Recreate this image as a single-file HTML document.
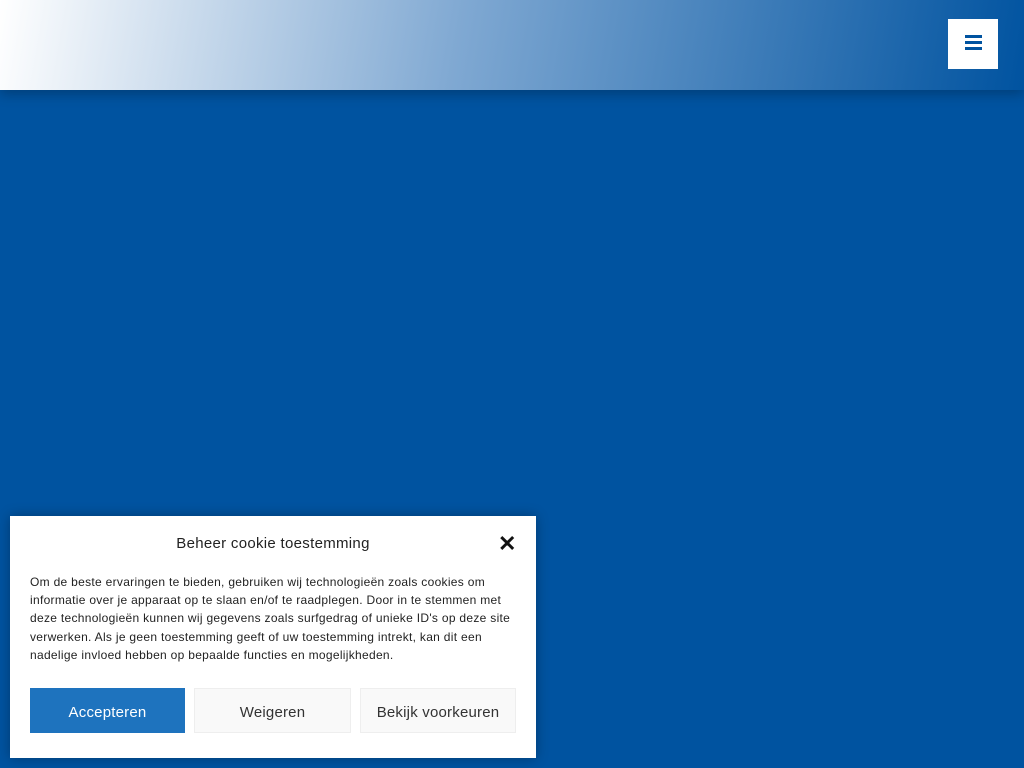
<!DOCTYPE html>
<html><head><meta charset="utf-8"><style>
*{margin:0;padding:0;box-sizing:border-box}
body{width:1024px;height:768px;overflow:hidden;background:#0053a0;font-family:"Liberation Sans",Arial,sans-serif;position:relative}
.hdr{position:absolute;left:0;top:0;width:1024px;height:90px;background:linear-gradient(100deg,#ffffff 0%,#7fa8d2 45%,#0053a0 100%);box-shadow:0 4px 12px rgba(0,0,0,.25)}
.menu{position:absolute;left:948px;top:19px;width:50px;height:50px;background:#fff}
.menu span{position:absolute;left:17px;width:17px;height:3px;background:#0053a0}
.box{position:absolute;left:10px;top:516px;width:526px;height:242px;background:#fff;box-shadow:0 0 12px rgba(0,0,0,.3)}
.title{position:absolute;left:0;width:526px;top:19px;text-align:center;font-size:15px;color:#222;letter-spacing:0.3px}
.x{position:absolute;left:488px;top:17px;font-size:22px;font-weight:bold;color:#111;line-height:1}
.txt{position:absolute;left:20px;top:57px;width:492px;font-size:12px;line-height:18.2px;color:#222;letter-spacing:0.3px}
.btn{position:absolute;top:172px;height:45px;font-size:15px;text-align:center;line-height:47px;color:#333;background:#f9f9f9;border:1px solid #eee;letter-spacing:0.2px}
</style></head><body>
<div class="hdr"></div>
<div class="menu"><span style="top:16px"></span><span style="top:22px"></span><span style="top:28px"></span></div>
<div class="box">
<div class="title">Beheer cookie toestemming</div>
<div class="x">✕</div>
<div class="txt">Om de beste ervaringen te bieden, gebruiken wij technologieën zoals cookies om informatie over je apparaat op te slaan en/of te raadplegen. Door in te stemmen met deze technologieën kunnen wij gegevens zoals surfgedrag of unieke ID's op deze site verwerken. Als je geen toestemming geeft of uw toestemming intrekt, kan dit een nadelige invloed hebben op bepaalde functies en mogelijkheden.</div>
<div class="btn" style="left:20px;width:155px;background:#1e73be;border-color:#1e73be;color:#fff">Accepteren</div>
<div class="btn" style="left:184px;width:157px">Weigeren</div>
<div class="btn" style="left:350px;width:156px">Bekijk voorkeuren</div>
</div>
</body></html>
